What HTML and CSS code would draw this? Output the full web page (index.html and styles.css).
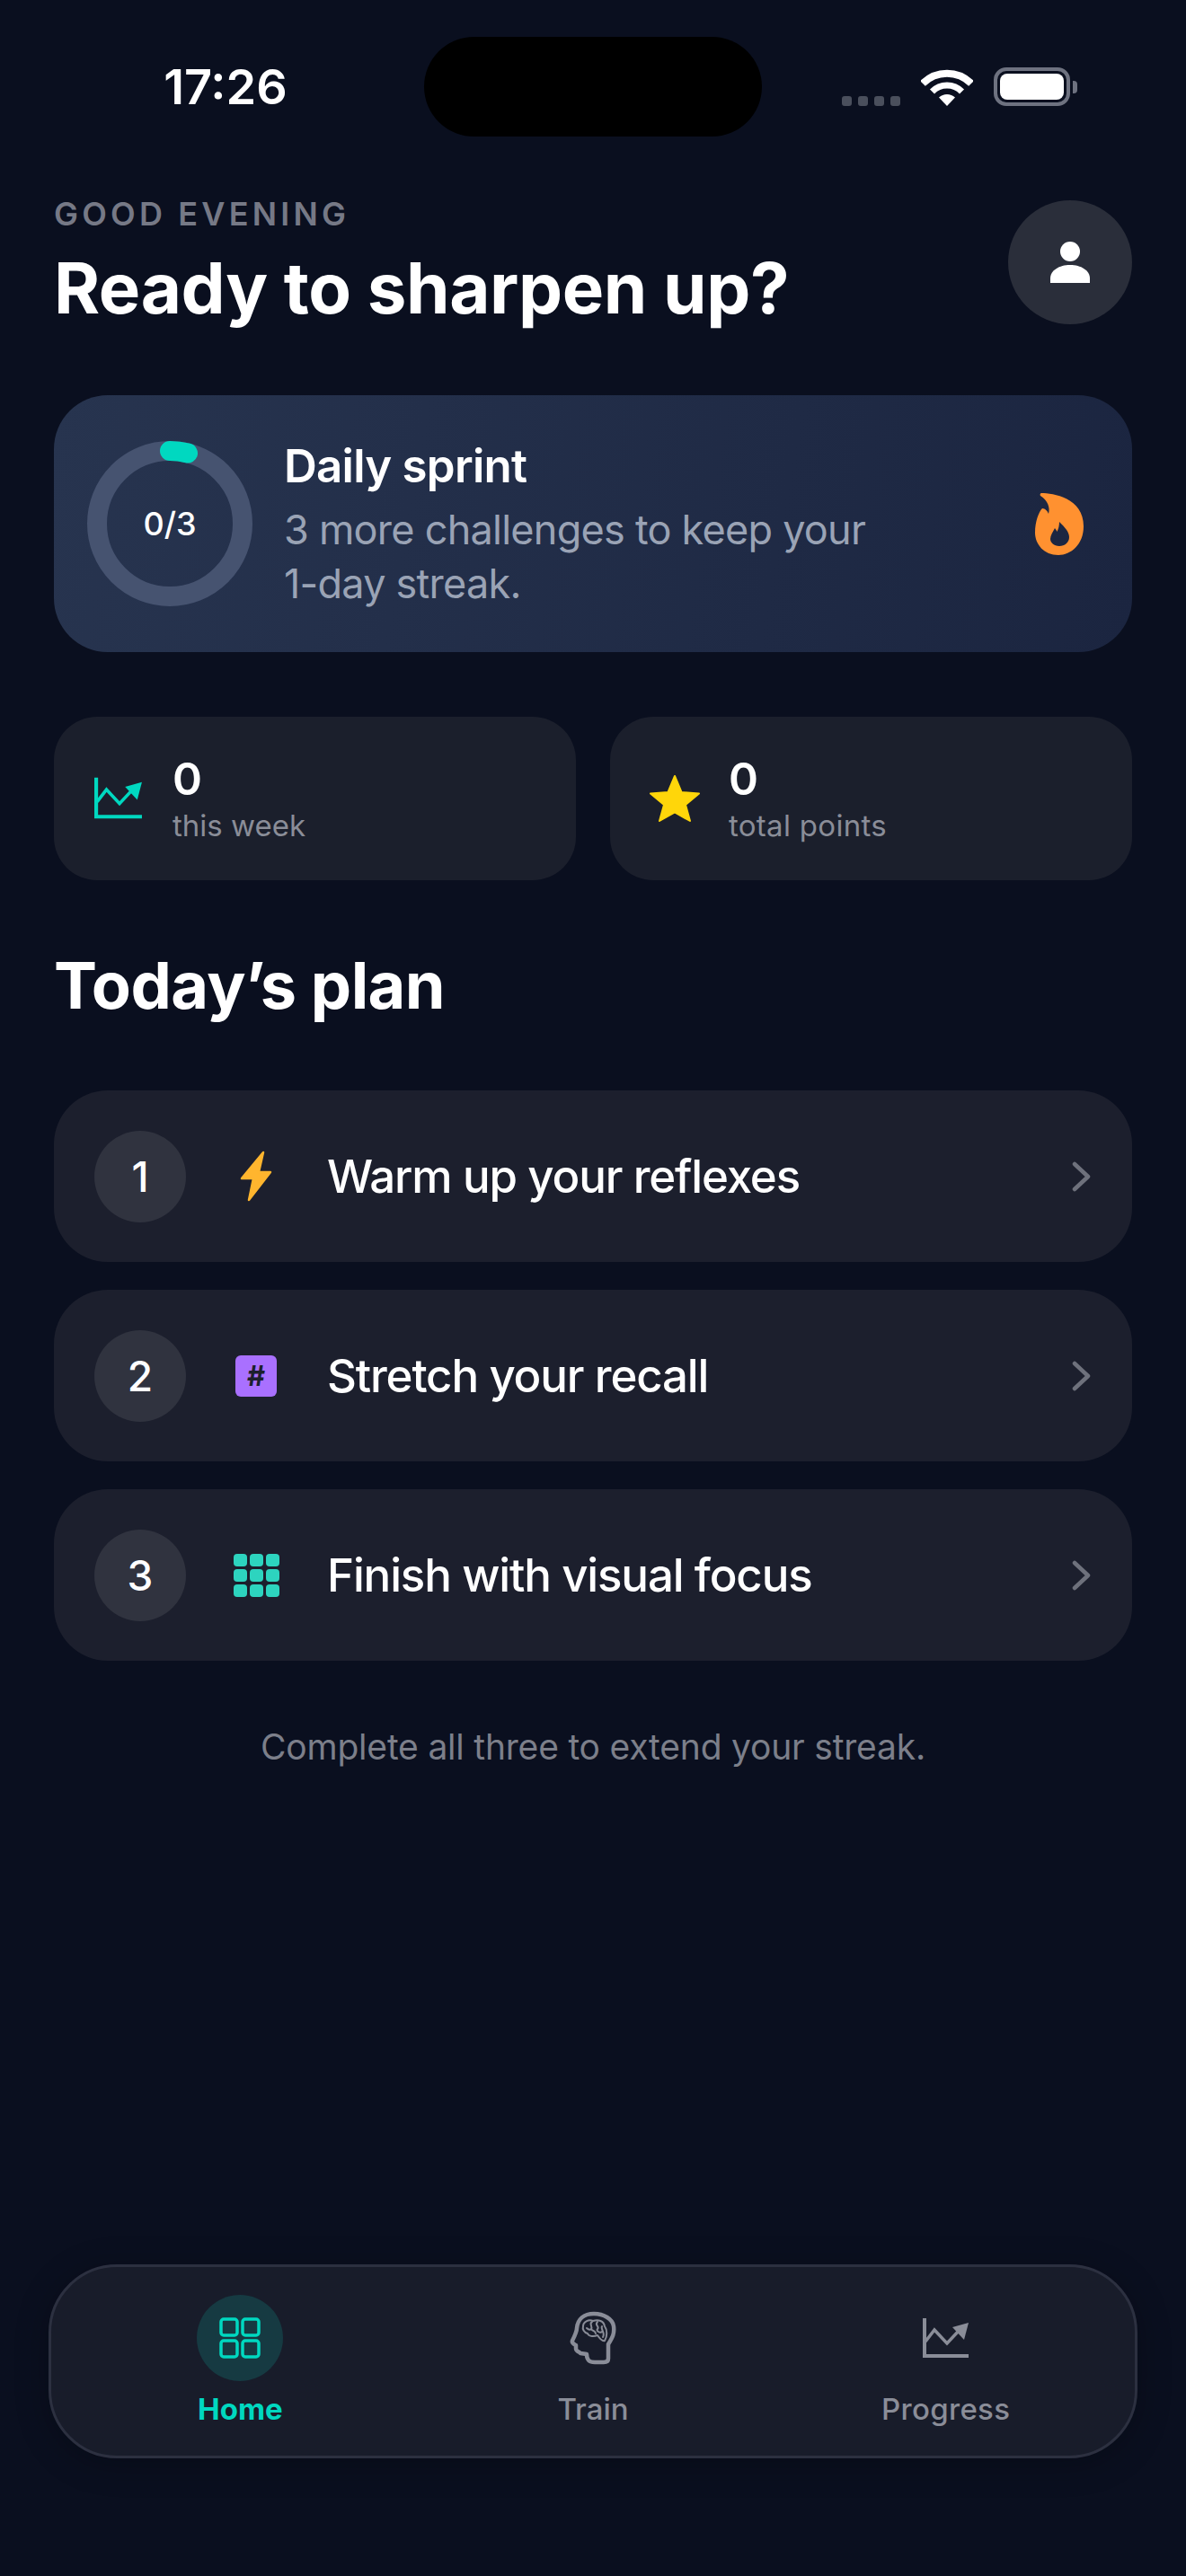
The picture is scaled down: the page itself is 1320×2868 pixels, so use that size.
FILE: index.html
```html
<!DOCTYPE html>
<html lang="en">
<head>
    <meta charset="UTF-8">
    <meta name="viewport" content="width=device-width, initial-scale=1.0">
    <title>Home</title>
    <link rel="stylesheet" href="styles.css">
</head>
<body>
    <div class="page">
        <div class="status-bar">
            <div class="status-time">17:26</div>
            <div class="island"></div>
            <div class="status-icons">
                <div class="signal"><span></span><span></span><span></span><span></span></div>
                <svg class="wifi" width="58" height="43" viewBox="0 0 58 43">
                    <path d="M2 18 A38 38 0 0 1 56 18" fill="none" stroke="#fff" stroke-width="8"/>
                    <path d="M12.500 27 A23 23 0 0 1 45.500 27" fill="none" stroke="#fff" stroke-width="7"/>
                    <path d="M29 43 L20 33.500 A13 13 0 0 1 38 33.500 Z" fill="#fff"/>
                </svg>
                <div class="battery"><div class="battery-fill"></div></div>
                <div class="battery-nub"></div>
            </div>
        </div>

        <div class="header">
            <div>
                <div class="greeting">GOOD EVENING</div>
                <h1 class="title">Ready to sharpen up?</h1>
            </div>
            <div class="avatar">
                <svg width="44" height="46" viewBox="0 0 44 46" fill="#fff">
                    <circle cx="22" cy="11" r="11"/>
                    <path d="M0 46 V41 C0 32 10 26 22 26 C34 26 44 32 44 41 V46 Z"/>
                </svg>
            </div>
        </div>

        <div class="sprint">
            <svg class="ring" width="184" height="184" viewBox="0 0 184 184">
                <circle cx="92" cy="92" r="81" fill="none" stroke="#465370" stroke-width="22"/>
                <path d="M92 11 A81 81 0 0 1 112 13.500" fill="none" stroke="#00d8c0" stroke-width="22" stroke-linecap="round"/>
                <text x="92" y="105" text-anchor="middle" class="ring-text">0/3</text>
            </svg>
            <div class="sprint-text">
                <div class="sprint-title">Daily sprint</div>
                <div class="sprint-desc">3 more challenges to keep your 1-day streak.</div>
            </div>
            <svg class="flame" width="54" height="70" viewBox="0 0 54 70">
                <path fill="#ff9130" fill-rule="evenodd" d="M7 1 C20 1 54 6 54 38 C54 58 40 70 26 70 C10 70 0 58 0 45 C0 33 4 22 8 18 C11 18 14 21 15 24 C17 17 14 9 6 4 C5 2.500 6 1 7 1 Z M27 33 C33 39 38 44 38 50 C38 56 33 60 27 60 C21 60 17 56 17 52 C17 48 20 44 22 40 C23 41 24 43 24.500 44 C26 41 27 37 27 33 Z"/>
            </svg>
        </div>

        <div class="stats">
            <div class="stat-card">
                <div class="stat-icon">
                    <svg width="54" height="48" viewBox="0 0 52 45">
                        <path d="M2 0 V42 H51" fill="none" stroke="#00d8c0" stroke-width="4"/>
                        <path d="M3 26 L13 13 L27 28 L41 13" fill="none" stroke="#00d8c0" stroke-width="3.500"/>
                        <path d="M51 5 L33 10 L46 24 Z" fill="#00d8c0"/>
                    </svg>
                </div>
                <div>
                    <div class="stat-num">0</div>
                    <div class="stat-label">this week</div>
                </div>
            </div>
            <div class="stat-card">
                <div class="stat-icon">
                    <svg width="58" height="54" viewBox="0 0 58 54">
                        <path d="M29 2 L36.500 20 L56 21.500 L41 34 L46 52 L29 42.500 L12 52 L17 34 L2 21.500 L21.500 20 Z" fill="#ffd60a" stroke="#ffd60a" stroke-width="2" stroke-linejoin="round"/>
                    </svg>
                </div>
                <div>
                    <div class="stat-num">0</div>
                    <div class="stat-label label-wide">total points</div>
                </div>
            </div>
        </div>

        <h2 class="plan-title">Today’s plan</h2>

        <div class="plan">
            <div class="plan-row">
                <div class="plan-num">1</div>
                <div class="plan-icon">
                    <svg width="36" height="57" viewBox="0 0 36 57">
                        <path d="M26 2 L2 31 H15 L10 55 L34 24 H21 Z" fill="#ffb52e" stroke="#ffb52e" stroke-width="2.500" stroke-linejoin="round"/>
                    </svg>
                </div>
                <div class="plan-text">Warm up your reflexes</div>
                <svg class="chevron" width="22" height="34" viewBox="0 0 22 34"><path d="M3 3 L18 17 L3 31" fill="none" stroke="#6e717c" stroke-width="4.500" stroke-linecap="round" stroke-linejoin="round"/></svg>
            </div>
            <div class="plan-row">
                <div class="plan-num">2</div>
                <div class="plan-icon"><div class="hash">#</div></div>
                <div class="plan-text">Stretch your recall</div>
                <svg class="chevron" width="22" height="34" viewBox="0 0 22 34"><path d="M3 3 L18 17 L3 31" fill="none" stroke="#6e717c" stroke-width="4.500" stroke-linecap="round" stroke-linejoin="round"/></svg>
            </div>
            <div class="plan-row">
                <div class="plan-num">3</div>
                <div class="plan-icon">
                    <div class="dots">
                        <span></span><span></span><span></span>
                        <span></span><span></span><span></span>
                        <span></span><span></span><span></span>
                    </div>
                </div>
                <div class="plan-text">Finish with visual focus</div>
                <svg class="chevron" width="22" height="34" viewBox="0 0 22 34"><path d="M3 3 L18 17 L3 31" fill="none" stroke="#6e717c" stroke-width="4.500" stroke-linecap="round" stroke-linejoin="round"/></svg>
            </div>
        </div>

        <div class="note">Complete all three to extend your streak.</div>

        <div class="tabbar">
            <div class="tab tab-active">
                <div class="tab-icon">
                    <svg width="46" height="46" viewBox="0 0 46 46" fill="none" stroke="#00d8c0" stroke-width="3.500">
                        <rect x="2" y="2" width="18" height="18" rx="3"/>
                        <rect x="26" y="2" width="18" height="18" rx="3"/>
                        <rect x="2" y="26" width="18" height="18" rx="3"/>
                        <rect x="26" y="26" width="18" height="18" rx="3"/>
                    </svg>
                </div>
                <div class="tab-label">Home</div>
            </div>
            <div class="tab">
                <div class="tab-icon">
                    <svg width="52" height="60" viewBox="34 33 52 60" fill="none" stroke="#8a8d98" stroke-linejoin="round" stroke-linecap="round">
                        <path stroke-width="4.500" d="M77 86 L77 70 C82 62 84 58 83 50 C82 42 72 36 61 36 C50 36 43 42 42 52 C42 56 40 60 37 66 C36 69 39 70 41 71 L41 75 C41 78 46 79 46 80 L53 81 C53 88 56 90 62 90 L72 90 C75 90 77 89 77 86 Z"/>
                        <path stroke-width="2" d="M49 50 C49 45 55 42 60 44 C66 42 72 44 73 50 C76 54 76 61 73 66 C70 67 67 63 65 60 C60 62 55 61 54 58 C50 57 48 53 49 50 Z"/>
                        <path stroke-width="2" d="M59 45 C55 47 60 50 58 53 C56 55 54 53 53 52 M58 53 C60 56 62 54 63 58 M65 45 C61 49 68 50 65 53 C63 55 68 58 70 56 M70 50 C68 53 74 57 71 62"/>
                    </svg>
                </div>
                <div class="tab-label">Train</div>
            </div>
            <div class="tab">
                <div class="tab-icon">
                    <svg width="52" height="45" viewBox="0 0 52 45">
                        <path d="M2 0 V42 H51" fill="none" stroke="#8a8d98" stroke-width="4"/>
                        <path d="M3 26 L13 13 L27 28 L41 13" fill="none" stroke="#8a8d98" stroke-width="3.500"/>
                        <path d="M51 5 L33 10 L46 24 Z" fill="#8a8d98"/>
                    </svg>
                </div>
                <div class="tab-label label-wide">Progress</div>
            </div>
        </div>
    </div>
</body>
</html>
```

FILE: styles.css
```css
body {
    margin: 0;
    background-color: #0a0f1f;
    font-family: 'Inter', 'Roboto', sans-serif;
    color: #ffffff;
}
.page {
    min-height: 2868px;
    display: flex;
    flex-direction: column;
    box-sizing: border-box;
}

/* status bar */
.status-bar {
    display: grid;
    grid-template-columns: 472px 376px 472px;
    padding-top: 41px;
}
.status-time {
    font-size: 54px;
    font-weight: 600;
    text-align: center;
    padding-left: 30px;
    line-height: 111px;
}
.island {
    height: 111px;
    background-color: #000000;
    border-radius: 56px;
}
.status-icons {
    display: flex;
    align-items: flex-end;
    height: 77px;
    padding-left: 89px;
}
.signal {
    display: flex;
    gap: 7px;
    margin-right: 23px;
}
.signal span {
    width: 11px;
    height: 11px;
    border-radius: 3px;
    background-color: #4a4f5c;
}
.wifi {
    margin-right: 23px;
}
.battery {
    width: 85px;
    height: 43px;
    box-sizing: border-box;
    border: 4px solid #6e7280;
    border-radius: 14px;
    padding: 3px;
}
.battery-fill {
    height: 100%;
    background-color: #ffffff;
    border-radius: 8px;
}
.battery-nub {
    width: 5px;
    height: 14px;
    margin-left: 3px;
    margin-bottom: 14px;
    background-color: #6e7280;
    border-radius: 0 4px 4px 0;
}

/* header */
.header {
    display: flex;
    justify-content: space-between;
    align-items: flex-start;
    margin-top: 71px;
    padding: 0 60px;
}
.greeting {
    font-size: 36px;
    font-weight: 600;
    letter-spacing: 4.200px;
    color: #767986;
    line-height: 30px;
}
.title {
    margin: 28px 0 0;
    font-size: 78px;
    font-weight: 700;
    letter-spacing: -0.400px;
    line-height: 80px;
}
.avatar {
    width: 138px;
    height: 138px;
    border-radius: 50%;
    background-color: #2a2e3a;
    display: flex;
    align-items: center;
    justify-content: center;
}

/* sprint card */
.sprint {
    display: flex;
    align-items: center;
    height: 286px;
    margin: 79px 60px 0;
    padding: 0 54px 0 37px;
    border-radius: 60px;
    background: linear-gradient(100deg, #27344f, #1b2540);
}
.ring {
    flex-shrink: 0;
}
.ring-text {
    font-family: 'Inter', sans-serif;
    font-size: 36px;
    font-weight: 500;
    fill: #ffffff;
}
.sprint-text {
    margin-left: 35px;
    width: 660px;
}
.sprint-title {
    font-size: 51px;
    font-weight: 600;
    letter-spacing: -0.750px;
    line-height: 62px;
    padding-top: 2px;
}
.sprint-desc {
    margin-top: 10px;
    font-size: 45px;
    letter-spacing: -0.750px;
    line-height: 60px;
    color: #9aa3b5;
}
.flame {
    margin-left: auto;
}

/* stats */
.stats {
    display: grid;
    grid-template-columns: 1fr 1fr;
    gap: 38px;
    margin: 72px 60px 0;
}
.stat-card {
    display: flex;
    align-items: center;
    height: 182px;
    padding-left: 43px;
    background-color: #1b1f2c;
    border-radius: 48px;
}
.stat-icon {
    width: 58px;
    margin-right: 31px;
    display: flex;
    justify-content: center;
}
.stat-num {
    font-size: 50px;
    font-weight: 600;
    line-height: 60px;
}
.stat-label {
    font-size: 33px;
    line-height: 44px;
    color: #8a8d98;
}
.label-wide {
    letter-spacing: 0.300px;
}

/* plan */
.plan-title {
    margin: 73px 60px 0;
    font-size: 72px;
    font-weight: 700;
    letter-spacing: -0.600px;
    line-height: 88px;
}
.plan {
    display: flex;
    flex-direction: column;
    gap: 31px;
    margin: 73px 60px 0;
}
.plan-row {
    display: flex;
    align-items: center;
    height: 191px;
    padding: 0 45px;
    background-color: #1c1f2d;
    border-radius: 60px;
}
.plan-num {
    width: 102px;
    height: 102px;
    border-radius: 50%;
    background-color: #30333f;
    display: flex;
    align-items: center;
    justify-content: center;
    font-size: 46px;
    font-weight: 500;
}
.plan-icon {
    width: 60px;
    margin: 0 49px 0 48px;
    display: flex;
    justify-content: center;
}
.plan-text {
    flex: 1;
    font-size: 51px;
    font-weight: 500;
    letter-spacing: -1.150px;
}
.hash {
    width: 46px;
    height: 46px;
    border-radius: 6px;
    background-color: #a970ff;
    color: #1c1f2d;
    font-size: 31px;
    font-weight: 700;
    line-height: 46px;
    text-align: center;
}
.dots {
    display: grid;
    grid-template-columns: repeat(3, 15px);
    grid-auto-rows: 14px;
    gap: 3px;
}
.dots span {
    background-color: #2dd4bf;
    border-radius: 4px;
}
.note {
    margin-top: 72px;
    font-size: 39px;
    letter-spacing: -0.200px;
    line-height: 48px;
    color: #7c7f8a;
    text-align: center;
}

/* tab bar */
.tabbar {
    display: grid;
    grid-template-columns: repeat(3, 1fr);
    box-sizing: border-box;
    height: 216px;
    margin: auto 54px 131px;
    padding: 31px 14px 0;
    background-color: #181c2a;
    border: 3px solid #2c3040;
    border-radius: 76px;
    box-shadow: 0 6px 36px rgba(0,0,0,0.25);
}
.tab {
    display: flex;
    flex-direction: column;
    align-items: center;
}
.tab-icon {
    width: 96px;
    height: 96px;
    border-radius: 50%;
    display: flex;
    align-items: center;
    justify-content: center;
}
.tab-label {
    margin-top: 10px;
    font-size: 33px;
    font-weight: 500;
    line-height: 42px;
    color: #8a8d98;
}
.tab-active .tab-icon {
    background-color: #163a42;
}
.tab-active .tab-label {
    font-weight: 700;
    color: #00d8c0;
}
```
